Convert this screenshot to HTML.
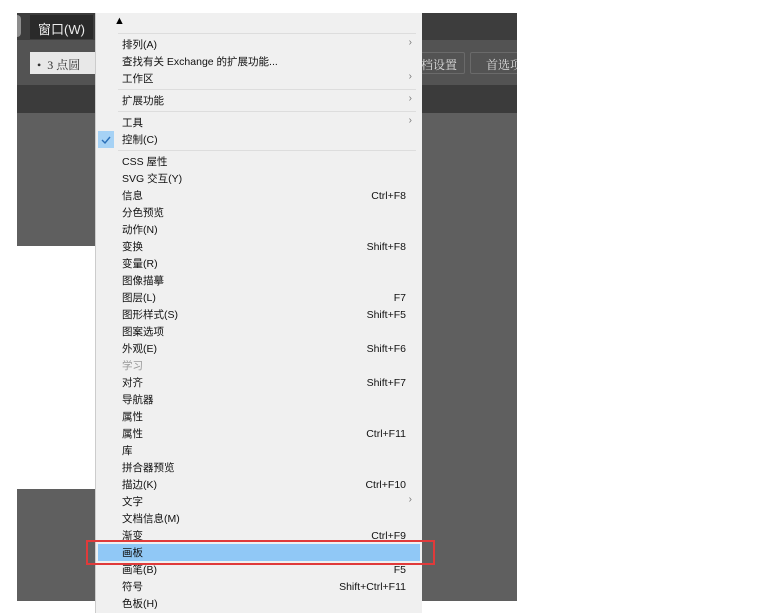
<html><head><style>
body{margin:0;width:766px;height:601px;background:#fff;position:relative;overflow:hidden;font-family:"Liberation Sans","Noto Sans CJK SC",sans-serif;}
.a{position:absolute}
.m{position:absolute;left:95px;top:13px;width:326px;height:600px;background:#f0f0f0;border-left:1px solid #ccc;}
.r{position:absolute;left:26px;font-size:10.5px;color:#111;height:17px;line-height:18px;width:284px}
.r span{position:absolute;right:0}
.sep{position:absolute;left:22px;right:6px;height:1px;background:#ddd}
.ar{position:absolute;right:10px;font-size:10px;color:#777}
</style></head><body>
<div class="a" style="left:17px;top:13px;width:500px;height:27px;background:#3d3d3d"></div>
<div class="a" style="left:30px;top:15px;width:63px;height:24px;background:#2a2a2a"></div>
<div class="a" style="left:17px;top:15px;width:4px;height:22px;border-radius:0 8px 8px 0;background:#ddd;opacity:.5"></div>
<div class="a" style="left:38px;top:19px;color:#eee;font-size:13px">窗口(W)</div>
<div class="a" style="left:17px;top:40px;width:500px;height:45px;background:#535353"></div>
<div class="a" style="left:30px;top:52px;width:65px;height:22px;background:#e8e8e8"></div>
<div class="a" style="left:37px;top:56px;font-size:12px;color:#333;font-family:'Liberation Serif','Noto Serif CJK SC',serif">•&nbsp; 3 点圆</div>
<div class="a" style="left:405px;top:52px;width:58px;height:20px;border:1px solid #6a6a6a;border-radius:2px"></div>
<div class="a" style="left:470px;top:52px;width:60px;height:20px;border:1px solid #6a6a6a;border-radius:2px"></div>
<div class="a" style="left:421px;top:56px;font-size:12px;color:#ddd;font-family:'Noto Serif CJK SC',serif">档设置</div>
<div class="a" style="left:486px;top:56px;font-size:12px;color:#ddd;font-family:'Noto Serif CJK SC',serif;width:31px;overflow:hidden;white-space:nowrap">首选项</div>
<div class="a" style="left:517px;top:40px;width:20px;height:45px;background:#fff"></div>
<div class="a" style="left:17px;top:85px;width:500px;height:28px;background:#3b3b3b"></div>
<div class="a" style="left:17px;top:113px;width:500px;height:488px;background:#5f5f5f"></div>
<div class="a" style="left:17px;top:246px;width:80px;height:243px;background:#fff"></div>
<div class="m">
<div class="a" style="left:18px;top:2px;font-size:11px">▲</div>
<div class="sep" style="top:20px"></div>
<div class="r" style="top:23px">排列(A)</div><div class="ar" style="top:24px">›</div>
<div class="r" style="top:40px">查找有关 Exchange 的扩展功能...</div>
<div class="r" style="top:57px">工作区</div><div class="ar" style="top:58px">›</div>
<div class="sep" style="top:76px"></div>
<div class="r" style="top:79px">扩展功能</div><div class="ar" style="top:80px">›</div>
<div class="sep" style="top:98px"></div>
<div class="r" style="top:101px">工具</div><div class="ar" style="top:102px">›</div>
<div class="a" style="left:2px;top:118px;width:16px;height:17px;background:#a6d2f5"><svg width="16" height="17"><path d="M4 9l3 3 5-6" stroke="#2a6fb8" stroke-width="1.4" fill="none"/></svg></div>
<div class="r" style="top:118px">控制(C)</div>
<div class="sep" style="top:137px"></div>
<div class="r" style="top:140px">CSS 屋性</div>
<div class="r" style="top:157px">SVG 交互(Y)</div>
<div class="r" style="top:174px">信息<span>Ctrl+F8</span></div>
<div class="r" style="top:191px">分色预览</div>
<div class="r" style="top:208px">动作(N)</div>
<div class="r" style="top:225px">变换<span>Shift+F8</span></div>
<div class="r" style="top:242px">变量(R)</div>
<div class="r" style="top:259px">图像描摹</div>
<div class="r" style="top:276px">图层(L)<span>F7</span></div>
<div class="r" style="top:293px">图形样式(S)<span>Shift+F5</span></div>
<div class="r" style="top:310px">图案选项</div>
<div class="r" style="top:327px">外观(E)<span>Shift+F6</span></div>
<div class="r" style="top:344px;color:#999">学习</div>
<div class="r" style="top:361px">对齐<span>Shift+F7</span></div>
<div class="r" style="top:378px">导航器</div>
<div class="r" style="top:395px">属性</div>
<div class="r" style="top:412px">属性<span>Ctrl+F11</span></div>
<div class="r" style="top:429px">库</div>
<div class="r" style="top:446px">拼合器预览</div>
<div class="r" style="top:463px">描边(K)<span>Ctrl+F10</span></div>
<div class="r" style="top:480px">文字</div><div class="ar" style="top:481px">›</div>
<div class="r" style="top:497px">文档信息(M)</div>
<div class="r" style="top:514px">渐变<span>Ctrl+F9</span></div>
<div class="a" style="left:2px;top:531px;width:322px;height:17px;background:#90c8f6"></div>
<div class="r" style="top:531px">画板</div>
<div class="r" style="top:548px">画笔(B)<span>F5</span></div>
<div class="r" style="top:565px">符号<span>Shift+Ctrl+F11</span></div>
<div class="r" style="top:582px">色板(H)</div>
</div>
<div class="a" style="left:86px;top:540px;width:345px;height:21px;border:2px solid #e03a3a"></div>
</body></html>
